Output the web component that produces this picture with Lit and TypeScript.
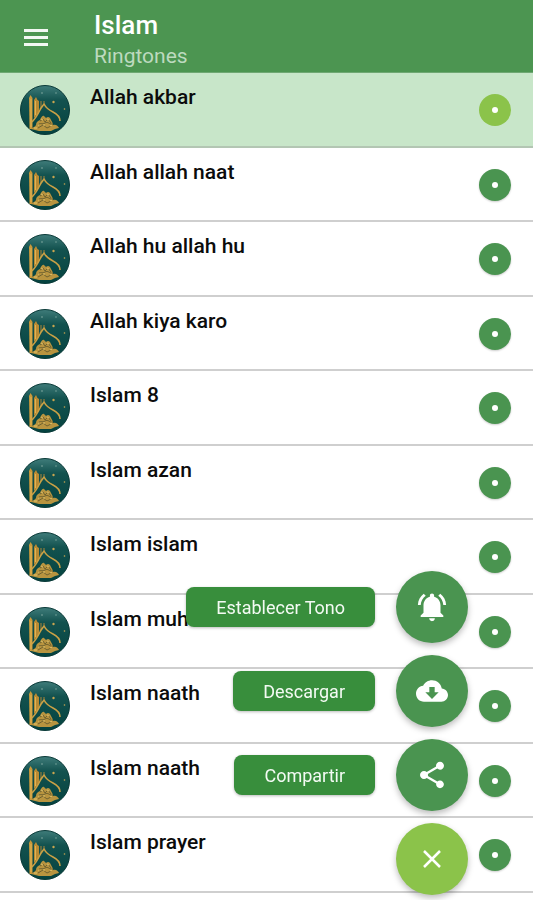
import { LitElement, html, css, svg } from "lit";
import { customElement, property } from "lit/decorators.js";
import { classMap } from "lit/directives/class-map.js";

@customElement("mosque-badge")
class MosqueBadge extends LitElement {
  static styles = css`
    :host { display: block; width: 50px; height: 50px; }
    svg { display: block; width: 100%; height: 100%; }
  `;
  render() {
    return html`<svg viewBox="0 0 50 50" aria-hidden="true">
      <defs>
        <linearGradient id="sky" x1="0" y1="0" x2="0" y2="1">
          <stop offset="0" stop-color="#3f7c7a" />
          <stop offset=".3" stop-color="#13524f" />
          <stop offset="1" stop-color="#04423f" />
        </linearGradient>
      </defs>
      <circle cx="25" cy="25" r="24.5" fill="url(#sky)" stroke="#0a3a38" />
      <path fill="#c9983a" d="M9 13l1.500-3 2 3v31H9.500z" />
      <path fill="#b98a33" d="M14 15l2-3 1.500 3 1.500 1v12l-5 5z" />
      <path d="M15.500 16v14M11 14v28" stroke="#e0b455" stroke-width="1" />
      <path d="M21 16v6M24 16v4" stroke="#a88438" stroke-width="1" />
      <path d="M12 37C16 33 18 29 20 25c1-3 3-4 4-6 2 4 5 6 9 8 4 2 7 5 7 9" fill="none" stroke="#caa045" stroke-width="1.600" stroke-linejoin="round" />
      <path fill="#b8943f" d="M11 44c2-2 4-2 5-4 0-3 2-4 4-5 1-3 3-5 4-4l2 2c2-2 4-1 5 2 1 2 2 3 2 5 3-1 5 1 6 3l-4 1-4 2H19z" />
      <path d="M18 40c2-3 4 0 7-2s5 2 8 1M20 36l3-2 2 3 3-3 3 4M18 43l5-3 4 3 4-2" fill="none" stroke="#6f6230" stroke-width="1" />
      <path d="M21 34l2 1M27 34l2 1M23 40h2M30 41l2-1M18 40h1M14 43h3" stroke="#e5c66c" stroke-width="1" />
      <g fill="#c9a550"><circle cx="33.500" cy="17" r="1.200" /><circle cx="44.500" cy="24" r=".8" /></g>
      <g fill="#86aea5"><circle cx="22" cy="8" r=".8" /><circle cx="36" cy="8" r=".7" /></g>
    </svg>`;
  }
}

@customElement("ringtone-row")
class RingtoneRow extends LitElement {
  @property() name = "";
  @property({ type: Boolean, reflect: true }) selected = false;

  static styles = css`
    :host {
      display: flex;
      align-items: flex-start;
      box-sizing: border-box;
      height: 100%;
      min-height: 72px;
      padding: 0 22px 0 20px;
      border-bottom: 2px solid #cfcfcf;
      background: #fff;
    }
    :host([selected]) { background: #c8e6c9; border-color: #b3c6b3; }
    mosque-badge { flex: none; margin-top: 12px; }
    .name {
      flex: 1;
      margin: 12px 0 0 20px;
      font-size: 21px;
      line-height: 24px;
      font-weight: 500;
      color: #0c0c0c;
    }
    .dot {
      flex: none;
      display: grid;
      place-items: center;
      width: 32px;
      height: 32px;
      margin-top: 21px;
      padding: 0;
      border: 0;
      border-radius: 50%;
      background: #4a9450;
      box-shadow: 0 1px 2px #0003;
    }
    .dot::after { content: ""; width: 6px; height: 6px; border-radius: 50%; background: #fff; }
    .active { background: #8bc34a; box-shadow: none; }
  `;
  render() {
    return html`
      <mosque-badge></mosque-badge>
      <span class="name">${this.name}</span>
      <button class=${classMap({ dot: true, active: this.selected })} aria-label="Opciones de ${this.name}"></button>
    `;
  }
}

const bell = svg`<path d="M7.580 4.080L6.150 2.650C3.750 4.480 2.170 7.300 2.030 10.500h2c.150-2.650 1.510-4.970 3.550-6.420zm12.390 6.420h2c-.150-3.200-1.730-6.020-4.120-7.850l-1.420 1.430c2.020 1.450 3.390 3.770 3.540 6.420zM18 11c0-3.070-1.640-5.640-4.500-6.320V4c0-.830-.670-1.500-1.500-1.500s-1.500.670-1.500 1.500v.680C7.630 5.360 6 7.920 6 11v5l-2 2v1h16v-1l-2-2v-5zm-6 11c.140 0 .270-.010.400-.040.650-.140 1.180-.580 1.440-1.180.100-.240.150-.500.150-.780h-4c.010 1.100.900 2 2.010 2z"/>`;
const cloud = svg`<path d="M19.350 10.040C18.670 6.590 15.640 4 12 4 9.110 4 6.600 5.640 5.350 8.040 2.340 8.360 0 10.910 0 14c0 3.310 2.690 6 6 6h13c2.760 0 5-2.240 5-5 0-2.640-2.050-4.780-4.650-4.960zM17 13l-5 5-5-5h3V9h4v4h3z"/>`;
const share = svg`<path d="M18 16.080c-.760 0-1.440.300-1.960.770L8.910 12.700c.050-.230.090-.460.090-.700s-.040-.470-.090-.700l7.050-4.110c.540.500 1.250.810 2.040.810 1.660 0 3-1.340 3-3s-1.340-3-3-3-3 1.340-3 3c0 .240.040.470.090.700L8.040 9.810C7.500 9.310 6.790 9 6 9c-1.660 0-3 1.340-3 3s1.340 3 3 3c.790 0 1.500-.310 2.040-.810l7.120 4.160c-.050.210-.080.430-.080.650 0 1.610 1.310 2.920 2.920 2.920s2.920-1.310 2.920-2.920-1.310-2.920-2.920-2.920z"/>`;

@customElement("speed-dial")
class SpeedDial extends LitElement {
  static styles = css`
    :host { display: flex; flex-direction: column; align-items: flex-end; gap: 12px; }
    .action { display: flex; align-items: center; gap: 21px; }
    .label {
      box-sizing: border-box;
      height: 40px;
      padding: 0 30px;
      border-radius: 8px;
      background: #388e3c;
      color: #f3faf3;
      font-size: 18px;
      line-height: 41px;
      box-shadow: 0 1px 3px #0004;
      white-space: nowrap;
    }
    .fab {
      display: grid;
      place-items: center;
      width: 72px;
      height: 72px;
      padding: 0;
      border: 0;
      border-radius: 50%;
      background: #4a9450;
      box-shadow: 0 3px 6px #0004;
    }
    .close { background: #8bc34a; }
    svg { display: block; width: 32px; height: 32px; fill: #fff; }
    .large { width: 34px; height: 34px; }
    .cross { width: 18px; height: 18px; fill: none; stroke: #fff; stroke-width: 2.500; }
  `;
  render() {
    const actions = [
      { id: "tone", text: "Establecer Tono", icon: bell, large: true },
      { id: "download", text: "Descargar", icon: cloud, large: false },
      { id: "share", text: "Compartir", icon: share, large: false },
    ];
    return html`
      ${actions.map(
        (a) => html`<div class="action">
          <label class="label" for=${a.id}>${a.text}</label>
          <button class="fab" id=${a.id}>
            <svg class=${classMap({ large: a.large })} viewBox="0 0 24 24" aria-hidden="true">${a.icon}</svg>
          </button>
        </div>`
      )}
      <button class="fab close" aria-label="Cerrar">
        <svg class="cross" viewBox="0 0 18 18" aria-hidden="true"><path d="M1 1l16 16M17 1L1 17" /></svg>
      </button>
    `;
  }
}

@customElement("app-root")
class AppRoot extends LitElement {
  static styles = css`
    :host {
      display: flex;
      flex-direction: column;
      min-height: 100vh;
      background: #fff;
      font-family: Roboto, "Liberation Sans", sans-serif;
    }
    header {
      display: flex;
      align-items: center;
      gap: 46px;
      box-sizing: border-box;
      min-height: 73px;
      padding: 2px 24px 0;
      background: #4c9551;
      border-bottom: 1px solid #6fa873;
    }
    .menu { display: grid; gap: 4px; width: 24px; padding: 0; border: 0; background: none; }
    .bar { height: 3px; background: #f2f8f2; }
    h1, p { margin: 0; }
    h1 { font-size: 26px; line-height: 32px; font-weight: 500; color: #fff; }
    p { font-size: 21px; line-height: 30px; color: #bddabf; }
    .titles { padding-top: 6px; }
    ul {
      flex: 1;
      display: grid;
      grid-auto-rows: 1fr;
      margin: 0;
      padding: 0 0 7px;
      list-style: none;
    }
    speed-dial { position: fixed; right: 65px; bottom: 5px; }
  `;
  render() {
    const names = [
      "Allah akbar", "Allah allah naat", "Allah hu allah hu", "Allah kiya karo",
      "Islam 8", "Islam azan", "Islam islam", "Islam muh",
      "Islam naath", "Islam naath", "Islam prayer",
    ];
    return html`
      <header>
        <button class="menu" aria-label="Menú">
          <span class="bar"></span><span class="bar"></span><span class="bar"></span>
        </button>
        <div class="titles"><h1>Islam</h1><p>Ringtones</p></div>
      </header>
      <ul>
        ${names.map((n, i) => html`<li><ringtone-row .name=${n} ?selected=${i === 0}></ringtone-row></li>`)}
      </ul>
      <speed-dial></speed-dial>
    `;
  }
}
